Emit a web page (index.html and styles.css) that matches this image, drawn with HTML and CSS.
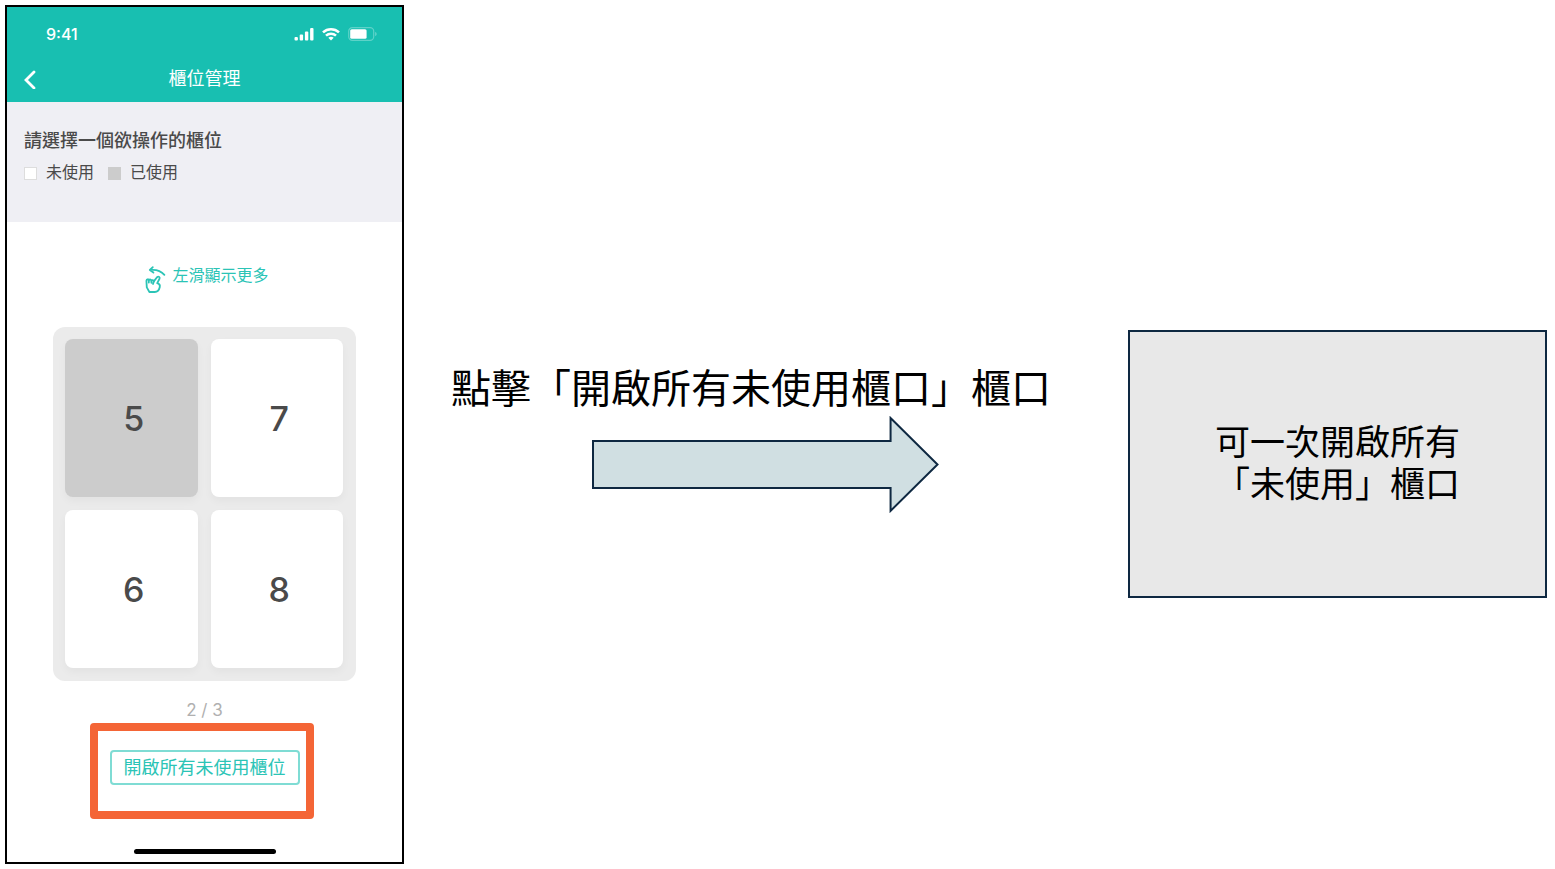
FILE: index.html
```
<!DOCTYPE html>
<html lang="zh-Hant">
<head>
<meta charset="utf-8">
<meta name="viewport" content="width=device-width, initial-scale=1">
<title>櫃位管理</title>
<link rel="stylesheet" href="styles.css">
</head>
<body>
<main class="flow">
  <section class="phone">
    <header class="topbar">
      <div class="status">
        <span class="time">9:41</span>
        <div class="status-icons">
          <svg width="20" height="14" viewBox="0 0 20 14" fill="#fff">
            <rect x="0.500" y="10" width="3.400" height="3.600" rx="1"/>
            <rect x="5.700" y="7.600" width="3.400" height="6" rx="1"/>
            <rect x="10.900" y="4.400" width="3.400" height="9.200" rx="1"/>
            <rect x="16.100" y="1" width="3.400" height="12.600" rx="1"/>
          </svg>
          <svg width="18" height="14" viewBox="0 0 18 14" fill="none" stroke="#fff" stroke-width="2.6">
            <path d="M1 5.400C5.600 1.200 12.400 1.200 17 5.400"/>
            <path d="M4 8.600C6.800 6.100 11.200 6.100 14 8.600"/>
            <path d="M6.300 10.700C7.900 9.400 10.100 9.400 11.700 10.700L9 13.400Z" fill="#fff" stroke="none"/>
          </svg>
          <svg width="29" height="14" viewBox="0 0 29 14">
            <rect x="0.700" y="0.700" width="25" height="12.600" rx="3.600" fill="none" stroke="#fff" stroke-opacity=".3" stroke-width="1.200"/>
            <rect x="2.200" y="2.200" width="16.400" height="9.600" rx="1.600" fill="#fff"/>
            <path d="M27.200 5v4c.9-.3 1.400-1.100 1.400-2s-.5-1.700-1.400-2z" fill="#fff" fill-opacity=".35"/>
          </svg>
        </div>
      </div>
      <div class="nav">
        <button class="back" type="button" aria-label="返回">
          <svg width="12" height="20" viewBox="0 0 12 20" fill="none" stroke="#fff" stroke-width="2.800" stroke-linecap="round">
            <path d="M10 3L2 11L10 19"/>
          </svg>
        </button>
        <h1>櫃位管理</h1>
      </div>
    </header>

    <div class="notice">
      <h2>請選擇一個欲操作的櫃位</h2>
      <ul class="legend">
        <li><span class="swatch"></span>未使用</li>
        <li><span class="swatch used"></span>已使用</li>
      </ul>
    </div>

    <div class="content">
      <p class="hint">
        <svg width="22" height="30" viewBox="0 0 22 30" fill="none" stroke="#2bc4b6" stroke-width="1.800" stroke-linecap="round" stroke-linejoin="round">
          <path d="M8.800 2.200L5.800 5L9.400 7.600M6 5C12 4.200 17 6 20.400 9.800"/>
          <path d="M5.400 27L2.800 22.400L2.400 15.800C2.600 13.800 4.600 13.800 4.800 15.600C5.200 13.800 7.200 14 7.400 15.800C8 14.600 9.600 15 9.800 16.400L13 12.200C14.600 10.800 16.400 12.200 15.400 14L13.200 18.200C15.800 18.800 16.200 20 15.800 22C15.200 24.800 13.600 27 10.800 27Z"/>
          <path d="M4.800 15.600V17.600M7.400 15.800V17.800M9.800 16.400L9 19"/>
        </svg>
        <span>左滑顯示更多</span>
      </p>

      <div class="lockers">
        <button type="button" class="locker used">5</button>
        <button type="button" class="locker">7</button>
        <button type="button" class="locker">6</button>
        <button type="button" class="locker">8</button>
      </div>
      <p class="pager">2 / 3</p>

      <div class="open-all">
        <button type="button">開啟所有未使用櫃位</button>
      </div>
      <div class="home-bar"></div>
    </div>
  </section>

  <section class="step">
    <p>點擊「開啟所有未使用櫃口」櫃口</p>
    <svg class="arrow" viewBox="0 0 348 97" fill="#d0dfe2" stroke="#0e2841" stroke-width="2">
      <path d="M1 25H299V2L346 48.500L299 95V72H1Z"/>
    </svg>
  </section>

  <section class="result">
    <p>可一次開啟所有<br>「未使用」櫃口</p>
  </section>
</main>
</body>
</html>
```

FILE: styles.css
```
* {
  box-sizing: border-box;
}

body {
  margin: 0;
  background: #fff;
  color: #000;
  font-family: "Liberation Sans", "Noto Sans CJK TC", sans-serif;
}

h1, h2, p, ul {
  margin: 0;
  padding: 0;
}

button {
  font-family: inherit;
  cursor: pointer;
}

svg {
  display: block;
}

.flow {
  display: grid;
  grid-template-columns: minmax(340px, 399fr) 724fr 419fr;
  align-items: start;
  padding: 5px 8px 5px 5px;
}

/* phone */
.phone {
  border: 2px solid #000;
  background: #fff;
}

.topbar {
  background: #18bfb1;
  color: #fff;
  padding-bottom: 5px;
}

.status {
  display: flex;
  justify-content: space-between;
  align-items: center;
  height: 54px;
  padding: 0 25px 0 39px;
}

.time {
  font-family: Inter, sans-serif;
  font-size: 16px;
  font-weight: 500;
}

.status-icons {
  display: flex;
  align-items: center;
  gap: 8px;
}

.nav {
  display: grid;
  grid-template-columns: 36px 1fr 36px;
  align-items: center;
  height: 36px;
}

.nav h1 {
  font-size: 18px;
  font-weight: 400;
  line-height: 24px;
  text-align: center;
}

.back {
  padding: 0 0 0 17px;
  border: 0;
  background: none;
}

.notice {
  height: 120px;
  padding: 26px 17px;
  background: #efeff4;
  color: #4a4a4a;
}

.notice h2 {
  font-family: "Noto Sans CJK TC", sans-serif;
  font-size: 18px;
  font-weight: 500;
  line-height: 22px;
}

.legend {
  display: flex;
  gap: 14px;
  margin-top: 11px;
  list-style: none;
  font-size: 16px;
  line-height: 24px;
}

.legend li {
  display: flex;
  align-items: center;
  gap: 9px;
}

.swatch {
  width: 13px;
  height: 13px;
  border: 1px solid #ddd;
  background: #fff;
}

.swatch.used {
  border-color: #ccc;
  background: #ccc;
}

.content {
  display: flex;
  flex-direction: column;
  align-items: center;
  padding: 43px 46px 8px;
}

.hint {
  display: flex;
  align-items: flex-start;
  gap: 6px;
  padding-left: 4px;
  color: #2bc4b6;
  font-size: 16px;
  line-height: 22px;
}

.lockers {
  display: grid;
  grid-template-columns: 1fr 1fr;
  gap: 13px;
  width: 100%;
  margin-top: 32px;
  padding: 12px 13px 13px 12px;
  border-radius: 12px;
  background: #ebebeb;
}

.locker {
  height: 158px;
  padding: 0 0 0 5px;
  border: 0;
  border-radius: 8px;
  background: #fff;
  box-shadow: 0 4px 8px rgba(0, 0, 0, 0.04);
  color: #4a4a4a;
  font-family: Inter, sans-serif;
  font-size: 34px;
  font-weight: 500;
}

.locker.used {
  background: #ccc;
}

.pager {
  margin-top: 18px;
  color: #b0b0b0;
  font-family: Inter, sans-serif;
  font-size: 17px;
  line-height: 22px;
}

.open-all {
  position: relative;
  margin-top: 29px;
}

.open-all button {
  display: block;
  height: 35px;
  padding: 0 12px;
  border: 2px solid #7fdcd4;
  border-radius: 4px;
  background: #fff;
  color: #2bc4b6;
  font-size: 18px;
  line-height: 24px;
}

/* highlight frame over the button */
.open-all::after {
  content: "";
  position: absolute;
  inset: -27px -14px -34px -20px;
  border: 8px solid #f46536;
  border-radius: 4px;
  pointer-events: none;
}

.home-bar {
  width: 142px;
  height: 5px;
  margin-top: 64px;
  border-radius: 3px;
  background: #000;
}

/* explanation */
.step {
  margin-top: 355px;
}

.step p {
  padding: 2px 0 0 47px;
  font-size: 40px;
  line-height: 54px;
}

.arrow {
  width: 48%;
  margin: 0 auto;
}

.result {
  display: flex;
  justify-content: center;
  align-items: center;
  min-height: 268px;
  margin-top: 325px;
  border: 2px solid #0e2841;
  background: #e8e8e8;
}

.result p {
  font-size: 35px;
  line-height: 42px;
}
```
